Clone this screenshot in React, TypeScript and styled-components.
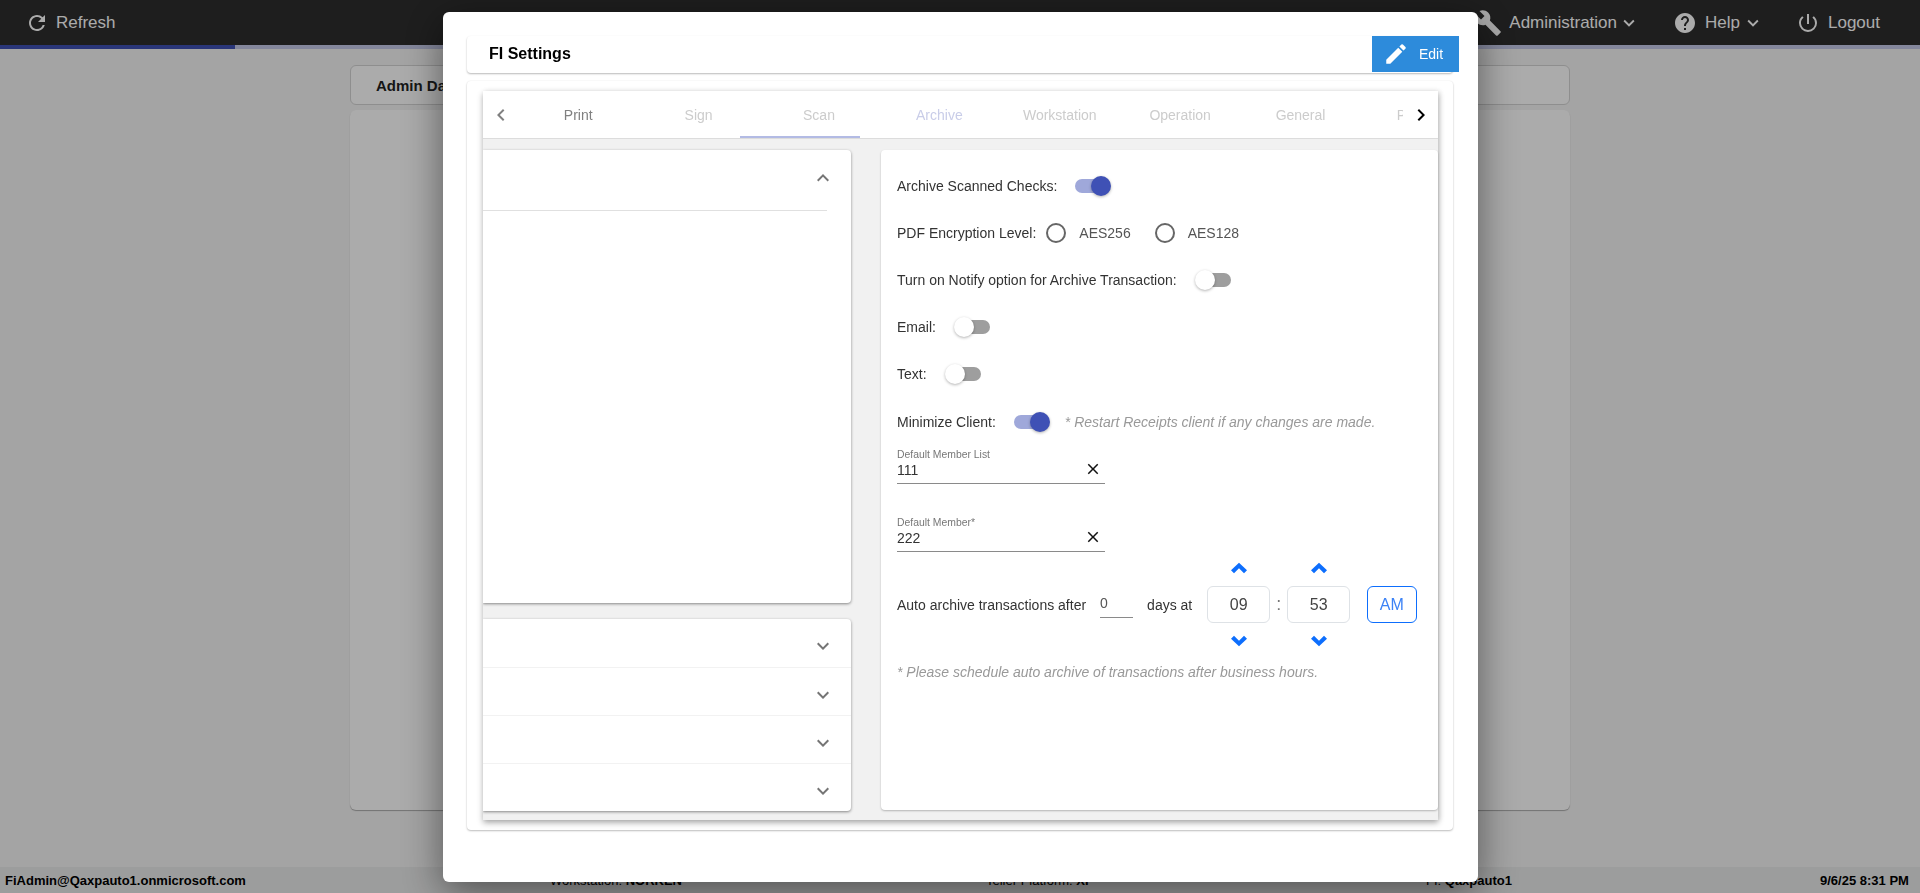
import React from "react";
import styled, { createGlobalStyle } from "styled-components";
import {
  MdRefresh,
  MdBuild,
  MdHelp,
  MdPowerSettingsNew,
  MdEdit,
  MdClose,
  MdKeyboardArrowDown,
  MdKeyboardArrowUp,
  MdKeyboardArrowLeft,
  MdKeyboardArrowRight,
} from "react-icons/md";

const Global = createGlobalStyle`
  html, body { margin: 0; padding: 0; height: 100%; overflow: hidden; }
  body { font-family: "Liberation Sans", Arial, sans-serif; background: #f5f5f5; color: #333; }
  * { box-sizing: border-box; }
`;

const Page = styled.div`
  height: 893px;
  display: flex;
  flex-direction: column;
`;
const TopBar = styled.header`
  height: 45px;
  background: #2d2d2d;
  color: #fff;
  display: flex;
  align-items: center;
  padding: 0 40px 0 25px;
  font-size: 17px;
  flex: none;
`;
const NavItem = styled.div<{ $gap?: number; $left?: number }>`
  display: flex;
  align-items: center;
  gap: ${(p) => p.$gap ?? 8}px;
  margin-left: ${(p) => p.$left ?? 0}px;
  white-space: nowrap;
`;
const NavCaret = styled(MdKeyboardArrowDown)`
  margin-left: -6px;
  font-size: 22px;
`;
const Spacer = styled.div`
  flex: 1;
`;
const Progress = styled.div`
  height: 4px;
  background: #c5cae9;
  flex: none;
`;
const ProgressFill = styled.div`
  height: 100%;
  width: 235px;
  background: #3f51b5;
`;
const Main = styled.main`
  flex: 1;
  width: 1220px;
  margin: 16px auto 0;
  display: flex;
  flex-direction: column;
  gap: 5px;
`;
const TitleCard = styled.div`
  height: 40px;
  background: #fff;
  border: 1px solid #d4d4d4;
  border-radius: 6px;
  padding: 0 25px;
  display: flex;
  align-items: center;
  font-size: 15px;
  font-weight: 700;
  color: #222;
`;
const ContentCard = styled.div`
  height: 700px;
  background: #fff;
  border-radius: 6px;
  box-shadow: 0 1px 1px rgba(0, 0, 0, 0.3);
`;
const StatusBar = styled.footer`
  height: 26px;
  margin-top: auto;
  flex: none;
  background: #e9eaea;
  display: grid;
  grid-template-columns: 545px 436px 440px 394px 1fr;
  align-items: center;
  padding-left: 5px;
  font-size: 13px;
  color: #000;
  white-space: nowrap;
`;
const Strong = styled.span`
  font-weight: 700;
`;
const Backdrop = styled.div`
  position: fixed;
  inset: 0;
  background: rgba(0, 0, 0, 0.33);
`;
const Modal = styled.section`
  position: fixed;
  left: 443px;
  top: 12px;
  width: 1035px;
  height: 870px;
  background: #fff;
  border-radius: 6px;
  box-shadow: 0 10px 40px rgba(0, 0, 0, 0.5);
  padding: 24px 25px 0 24px;
  display: flex;
  flex-direction: column;
  gap: 8px;
`;
const HeaderCard = styled.div`
  height: 37px;
  flex: none;
  border-radius: 4px;
  box-shadow: 0 1px 2px rgba(0, 0, 0, 0.28);
  display: flex;
  align-items: flex-start;
  justify-content: space-between;
  padding-left: 22px;
`;
const HeaderTitle = styled.h2`
  margin: 0;
  font-size: 16px;
  line-height: 36px;
  font-weight: 700;
  color: #000;
`;
const EditButton = styled.button`
  width: 87px;
  height: 36px;
  margin-right: -6px;
  background: #2d8bdb;
  border: 0;
  color: #fff;
  display: flex;
  align-items: center;
  padding: 0 0 0 11px;
  gap: 10px;
  font: 14px "Liberation Sans", Arial, sans-serif;
`;
const OuterCard = styled.div`
  height: 749px;
  flex: none;
  border-radius: 4px;
  box-shadow: 0 1px 2px rgba(0, 0, 0, 0.25), 0 0 2px rgba(0, 0, 0, 0.06);
  padding: 10px 15px 10px 16px;
`;
const Panel = styled.div`
  height: 729px;
  background: #f1f1f1;
  box-shadow: 0 3px 6px rgba(0, 0, 0, 0.3), 2px 0 5px rgba(0, 0, 0, 0.1);
  display: flex;
  flex-direction: column;
`;
const TabBar = styled.nav`
  height: 48px;
  flex: none;
  background: #fff;
  border-bottom: 1px solid #dcdcdc;
  display: flex;
  align-items: center;
`;
const TabArrow = styled.div<{ $dark?: boolean }>`
  width: 35px;
  flex: none;
  display: flex;
  align-items: center;
  justify-content: center;
  font-size: 24px;
  color: ${(p) => (p.$dark ? "#000" : "#808080")};
`;
const TabStrip = styled.div`
  flex: 1;
  height: 100%;
  display: flex;
  overflow: hidden;
  position: relative;
`;
const Tab = styled.div<{ $color: string }>`
  flex: 0 0 120.4px;
  display: flex;
  align-items: center;
  justify-content: center;
  font-size: 14px;
  color: ${(p) => p.$color};
`;
const TabInk = styled.div`
  position: absolute;
  left: 222px;
  bottom: 0;
  width: 120px;
  height: 2px;
  background: #b3bbe4;
`;
const Body = styled.div`
  flex: 1;
  display: grid;
  grid-template-columns: 368px 557px;
  column-gap: 30px;
  padding-top: 11px;
  padding-bottom: 9px;
  min-height: 0;
`;
const LeftColumn = styled.div`
  display: flex;
  flex-direction: column;
  gap: 16px;
  clip-path: inset(-8px -8px -8px 0);
`;
const PanelCard = styled.div`
  height: 453px;
  background: #fff;
  border-radius: 0 4px 4px 0;
  box-shadow: 0 1px 3px rgba(0, 0, 0, 0.45);
`;
const AccordionHead = styled.div`
  height: 61px;
  width: 344px;
  border-bottom: 1px solid #e0e0e0;
  display: flex;
  justify-content: flex-end;
  align-items: flex-start;
  padding-top: 16px;
  font-size: 24px;
  color: #757575;
`;
const HeadIcon = styled.span`
  margin-right: -8px;
  display: flex;
`;
const AccordionList = styled.div`
  background: #fff;
  border-radius: 0 4px 4px 0;
  box-shadow: 0 1px 3px rgba(0, 0, 0, 0.45);
`;
const AccordionRow = styled.div`
  height: 48px;
  display: flex;
  align-items: center;
  justify-content: flex-end;
  padding: 6px 16px 0 0;
  font-size: 24px;
  color: #757575;
  & + & {
    border-top: 1px solid #f2f2f2;
  }
`;
const FormCard = styled.div`
  height: 660px;
  background: #fff;
  border-radius: 4px;
  box-shadow: 0 1px 2px rgba(0, 0, 0, 0.25);
  padding: 12px 0 0 16px;
`;
const Row = styled.div`
  height: 47.2px;
  display: flex;
  align-items: center;
  font-size: 14px;
  color: #333;
`;
const Label = styled.span<{ $gap?: number }>`
  margin-right: ${(p) => p.$gap ?? 18}px;
  white-space: nowrap;
`;
const SwitchBox = styled.span`
  position: relative;
  display: block;
  width: 36px;
  height: 20px;
  flex: none;
`;
const Track = styled.span<{ $on?: boolean }>`
  position: absolute;
  top: 3px;
  left: ${(p) => (p.$on ? 0 : 2)}px;
  width: 34px;
  height: 14px;
  border-radius: 7px;
  background: ${(p) => (p.$on ? "#9fa8da" : "#9e9e9e")};
`;
const Thumb = styled.span<{ $on?: boolean }>`
  position: absolute;
  top: 0;
  left: ${(p) => (p.$on ? 16 : 0)}px;
  width: 20px;
  height: 20px;
  border-radius: 50%;
  background: ${(p) => (p.$on ? "#3f51b5" : "#fff")};
  box-shadow: 0 1px 3px rgba(0, 0, 0, 0.3);
`;
const Radio = styled.span<{ $left?: number }>`
  width: 20px;
  height: 20px;
  border: 2px solid #666;
  border-radius: 50%;
  flex: none;
  margin-left: ${(p) => p.$left ?? 0}px;
`;
const RadioText = styled.span`
  margin-left: 13px;
  color: #555;
`;
const Note = styled.span`
  margin-left: 15px;
  font-size: 14px;
  font-style: italic;
  color: #999;
  white-space: nowrap;
`;
const NoteLine = styled.p`
  margin: 14px 0 0;
  font-size: 14px;
  line-height: 16px;
  font-style: italic;
  color: #999;
`;
const Field = styled.div<{ $top?: number }>`
  width: 208px;
  height: 37px;
  margin-top: ${(p) => p.$top ?? 0}px;
  border-bottom: 1px solid #8a8a8a;
  position: relative;
  padding-top: 2px;
`;
const FieldLabel = styled.div`
  font-size: 10.4px;
  line-height: 12px;
  color: #777;
`;
const FieldValue = styled.div`
  font-size: 14px;
  line-height: 17px;
  margin-top: 1px;
  color: #333;
`;
const ClearIcon = styled.span`
  position: absolute;
  right: 3px;
  top: 13px;
  display: flex;
  font-size: 18px;
  color: #111;
`;
const AutoRow = styled.div`
  display: flex;
  align-items: center;
  margin-top: 7px;
  font-size: 14px;
  color: #333;
`;
const DaysInput = styled.div`
  width: 33px;
  height: 26px;
  margin: 0 14px;
  border-bottom: 1px solid #8a8a8a;
  font-size: 14px;
  line-height: 23px;
  color: #555;
`;
const Spinner = styled.div<{ $left?: number }>`
  display: flex;
  flex-direction: column;
  align-items: center;
  gap: 9px;
  margin-left: ${(p) => p.$left ?? 0}px;
`;
const ArrowIcon = styled.svg`
  display: block;
  width: 16px;
  height: 18px;
  fill: #0d6efd;
`;
const TimeBox = styled.div`
  width: 63px;
  height: 37px;
  border: 1px solid #dee2e6;
  border-radius: 6px;
  display: flex;
  align-items: center;
  justify-content: center;
  font-size: 16px;
  color: #444;
`;
const Colon = styled.span`
  width: 17px;
  text-align: center;
  font-size: 18px;
  color: #777;
`;
const AmButton = styled.button`
  width: 50px;
  height: 37px;
  margin-left: 16.5px;
  border: 1px solid #0d6efd;
  border-radius: 6px;
  background: #fff;
  color: #3b82f6;
  font: 16px "Liberation Sans", Arial, sans-serif;
  padding: 0;
`;

const Switch = ({ on }: { on?: boolean }) => (
  <SwitchBox>
    <Track $on={on} />
    <Thumb $on={on} />
  </SwitchBox>
);

const UpArrow = () => (
  <ArrowIcon viewBox="0 0 16 18">
    <polygon points="8,3.7 16,11.2 13,14.2 8,9.2 3,14.2 0,11.2" />
  </ArrowIcon>
);
const DownArrow = () => (
  <ArrowIcon viewBox="0 0 16 18">
    <polygon points="8,14.3 16,6.8 13,3.8 8,8.8 3,3.8 0,6.8" />
  </ArrowIcon>
);

const TimeSpinner = ({ value, left }: { value: string; left?: number }) => (
  <Spinner $left={left}>
    <UpArrow />
    <TimeBox>{value}</TimeBox>
    <DownArrow />
  </Spinner>
);

const tabs: [string, string][] = [
  ["Print", "#808080"],
  ["Sign", "#cccccc"],
  ["Scan", "#cccccc"],
  ["Archive", "#c9cde8"],
  ["Workstation", "#cccccc"],
  ["Operation", "#cccccc"],
  ["General", "#cccccc"],
  ["Printers", "#cccccc"],
];

export default function App() {
  return (
    <>
      <Global />
      <Page>
        <TopBar>
          <NavItem $gap={7}>
            <MdRefresh size={24} />
            Refresh
          </NavItem>
          <Spacer />
          <NavItem $gap={7}>
            <MdBuild size={28} />
            Administration
            <NavCaret />
          </NavItem>
          <NavItem $left={33} $gap={8}>
            <MdHelp size={24} />
            Help
            <NavCaret />
          </NavItem>
          <NavItem $left={32} $gap={8}>
            <MdPowerSettingsNew size={24} />
            Logout
          </NavItem>
        </TopBar>
        <Progress>
          <ProgressFill />
        </Progress>
        <Main>
          <TitleCard>Admin Dashboard</TitleCard>
          <ContentCard />
        </Main>
        <StatusBar>
          <Strong>FiAdmin@Qaxpauto1.onmicrosoft.com</Strong>
          <span>
            Workstation: <Strong>NORKEN</Strong>
          </span>
          <span>
            Teller Platform: <Strong>XI</Strong>
          </span>
          <span>
            FI: <Strong>Qaxpauto1</Strong>
          </span>
          <Strong>9/6/25 8:31 PM</Strong>
        </StatusBar>
      </Page>
      <Backdrop />
      <Modal>
        <HeaderCard>
          <HeaderTitle>FI Settings</HeaderTitle>
          <EditButton>
            <MdEdit size={26} />
            Edit
          </EditButton>
        </HeaderCard>
        <OuterCard>
          <Panel>
            <TabBar>
              <TabArrow>
                <MdKeyboardArrowLeft />
              </TabArrow>
              <TabStrip>
                {tabs.map(([t, c]) => (
                  <Tab key={t} $color={c}>
                    {t}
                  </Tab>
                ))}
                <TabInk />
              </TabStrip>
              <TabArrow $dark>
                <MdKeyboardArrowRight />
              </TabArrow>
            </TabBar>
            <Body>
              <LeftColumn>
                <PanelCard>
                  <AccordionHead>
                    <HeadIcon>
                      <MdKeyboardArrowUp />
                    </HeadIcon>
                  </AccordionHead>
                </PanelCard>
                <AccordionList>
                  {[0, 1, 2, 3].map((i) => (
                    <AccordionRow key={i}>
                      <MdKeyboardArrowDown />
                    </AccordionRow>
                  ))}
                </AccordionList>
              </LeftColumn>
              <FormCard>
                <Row>
                  <Label>Archive Scanned Checks:</Label>
                  <Switch on />
                </Row>
                <Row>
                  <Label $gap={10}>PDF Encryption Level:</Label>
                  <Radio />
                  <RadioText>AES256</RadioText>
                  <Radio $left={24} />
                  <RadioText>AES128</RadioText>
                </Row>
                <Row>
                  <Label>Turn on Notify option for Archive Transaction:</Label>
                  <Switch />
                </Row>
                <Row>
                  <Label>Email:</Label>
                  <Switch />
                </Row>
                <Row>
                  <Label>Text:</Label>
                  <Switch />
                </Row>
                <Row>
                  <Label>Minimize Client:</Label>
                  <Switch on />
                  <Note>* Restart Receipts client if any changes are made.</Note>
                </Row>
                <Field $top={2}>
                  <FieldLabel>Default Member List</FieldLabel>
                  <FieldValue>111</FieldValue>
                  <ClearIcon>
                    <MdClose />
                  </ClearIcon>
                </Field>
                <Field $top={31}>
                  <FieldLabel>Default Member*</FieldLabel>
                  <FieldValue>222</FieldValue>
                  <ClearIcon>
                    <MdClose />
                  </ClearIcon>
                </Field>
                <AutoRow>
                  <span>Auto archive transactions after</span>
                  <DaysInput>0</DaysInput>
                  <span>days at</span>
                  <TimeSpinner value="09" left={15} />
                  <Colon>:</Colon>
                  <TimeSpinner value="53" />
                  <AmButton>AM</AmButton>
                </AutoRow>
                <NoteLine>* Please schedule auto archive of transactions after business hours.</NoteLine>
              </FormCard>
            </Body>
          </Panel>
        </OuterCard>
      </Modal>
    </>
  );
}
